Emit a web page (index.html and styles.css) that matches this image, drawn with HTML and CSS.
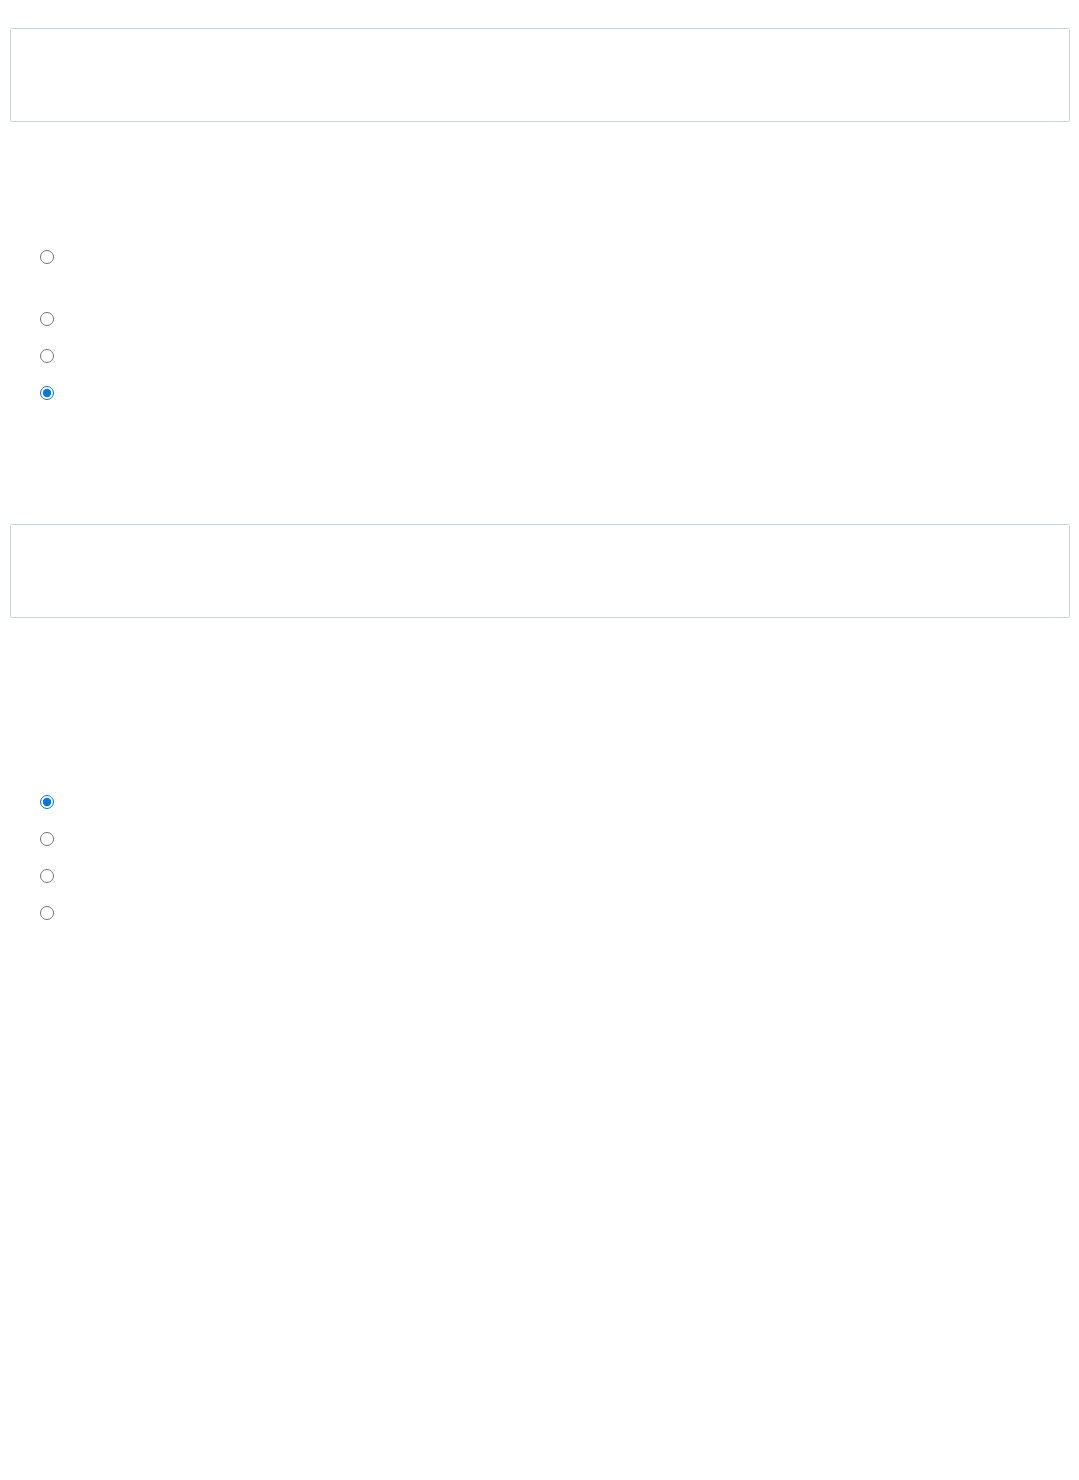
FILE: index.html
```html
<!DOCTYPE html>
<html lang="en">
  <head>
    <meta charset="UTF-8" />
    <meta name="viewport" content="width=device-width, initial-scale=1.0" />
    <title>Options</title>
    <link rel="stylesheet" href="styles.css">
  </head>
  <body>
    <!-- First group -->
    <section class="group group-first">
      <div class="panel"></div>
      <form class="options">
        <label class="option option-tall"><input type="radio" name="first" aria-label="Option 1" /></label>
        <label class="option"><input type="radio" name="first" aria-label="Option 2" /></label>
        <label class="option"><input type="radio" name="first" aria-label="Option 3" /></label>
        <label class="option"><input type="radio" name="first" aria-label="Option 4" checked /></label>
      </form>
    </section>

    <!-- Second group -->
    <section class="group group-second">
      <div class="panel"></div>
      <form class="options">
        <label class="option"><input type="radio" name="second" aria-label="Option 1" checked /></label>
        <label class="option"><input type="radio" name="second" aria-label="Option 2" /></label>
        <label class="option"><input type="radio" name="second" aria-label="Option 3" /></label>
        <label class="option"><input type="radio" name="second" aria-label="Option 4" /></label>
      </form>
    </section>
  </body>
</html>
```

FILE: styles.css
```css
body {
  margin: 0;
  font-family: "Liberation Sans", Arial, sans-serif;
  background: #fff;
}
.group {
  display: flex;
  flex-direction: column;
}
.group-first {
  padding-top: 28px;
}
.group-second {
  padding-top: 113px;
}
.panel {
  height: 94px;
  margin: 0 9px 0 10px;
  box-sizing: border-box;
  border: 1px solid #cdd3dd;
  border-radius: 2px;
}
.options {
  display: flex;
  flex-direction: column;
  padding-left: 40px;
  margin: 0;
}
.group-first .options {
  padding-top: 116px;
}
.group-second .options {
  padding-top: 165px;
}
.option {
  display: flex;
  align-items: flex-start;
  height: 37px;
  padding-top: 12px;
  box-sizing: border-box;
}
.option-tall {
  height: 62px;
}
input[type="radio"] {
  width: 14px;
  height: 14px;
  margin: 0;
  accent-color: #0a76d6;
}
```
